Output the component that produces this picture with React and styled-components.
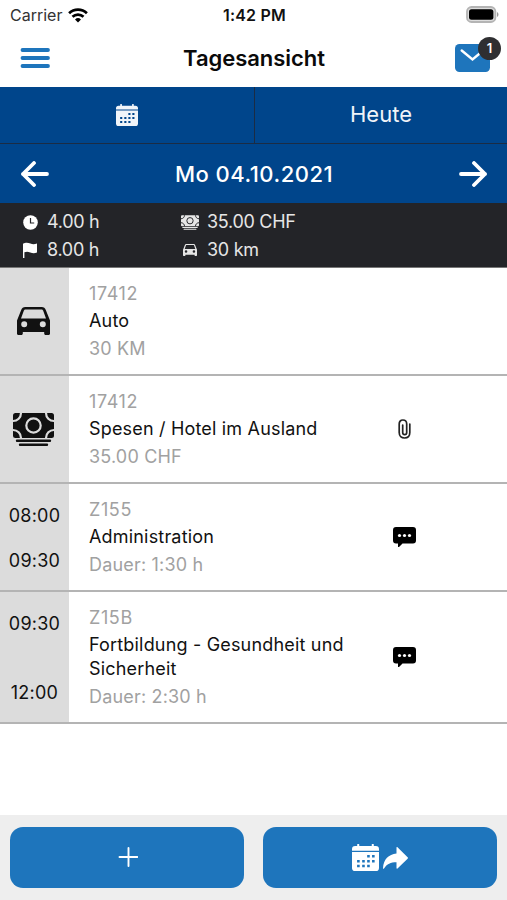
import React from 'react';
import styled, { createGlobalStyle } from 'styled-components';

const PRIMARY = '#1e75bc';
const NAVY = '#00458b';
const DARK = '#232428';
const MUTED = '#a1a1a1';

const GlobalStyle = createGlobalStyle`
  * {
    box-sizing: border-box;
  }
  body {
    margin: 0;
    background: #fff;
    font-family: Inter, 'Liberation Sans', sans-serif;
    color: #111;
  }
  svg {
    display: block;
    flex: none;
  }
  button {
    border: 0;
    padding: 0;
    background: none;
    font: inherit;
    color: inherit;
  }
`;

const Screen = styled.div`
  width: 507px;
  height: 900px;
  display: flex;
  flex-direction: column;
  overflow: hidden;
`;

const StatusBar = styled.div`
  height: 29px;
  padding: 0 8px 0 10px;
  display: grid;
  grid-template-columns: 1fr auto 1fr;
  align-items: center;
  font-size: 16px;
  line-height: 28px;
`;

const Carrier = styled.div`
  display: flex;
  align-items: center;
  gap: 6px;
  padding-top: 1px;
  color: #333;
`;

const Clock = styled.div`
  padding-top: 1px;
  font-weight: 600;
  letter-spacing: 0.2px;
`;

const BatteryWrapper = styled.div`
  display: flex;
  justify-content: flex-end;
`;

const Header = styled.header`
  height: 58px;
  padding: 0 17px 0 20px;
  display: grid;
  grid-template-columns: 1fr auto 1fr;
  align-items: center;
`;

const Title = styled.h1`
  margin: 0 2px 0 0;
  font-size: 22px;
  line-height: 56px;
  font-weight: 600;
  color: #0a0a0a;
  letter-spacing: -0.05px;
`;

const MailButton = styled.button`
  position: relative;
  justify-self: end;
  width: 35px;
  height: 28px;
`;

const Badge = styled.span`
  position: absolute;
  top: -7px;
  right: -11px;
  width: 23px;
  height: 23px;
  border-radius: 50%;
  background: #2f2f31;
  color: #fff;
  font-size: 13px;
  line-height: 23px;
  font-weight: 600;
  text-align: center;
`;

const Tabs = styled.div`
  height: 57px;
  display: grid;
  grid-template-columns: 254px 253px;
  background: ${NAVY};
  border-bottom: 1px solid #1b2c44;
`;

const Tab = styled.button`
  display: flex;
  align-items: center;
  justify-content: center;
  padding-bottom: 1px;
  color: #f0f4f9;
  font-size: 22px;
  line-height: 26px;
  & + & {
    padding-bottom: 2px;
    border-left: 1px solid #1b2c44;
  }
`;

const DateBar = styled.div`
  height: 59px;
  padding: 0 20px 0 21px;
  display: flex;
  align-items: center;
  justify-content: space-between;
  background: ${NAVY};
  color: #fff;
`;

const DateText = styled.div`
  font-size: 22px;
  font-weight: 500;
  letter-spacing: 0.5px;
`;

const Summary = styled.div`
  height: 65px;
  padding: 5px 21px 4px;
  display: grid;
  grid-template-columns: 160px 1fr;
  grid-auto-rows: 28px;
  background: ${DARK};
  border-bottom: 1px solid #777;
`;

const Stat = styled.div`
  display: flex;
  align-items: center;
  gap: 8px;
  color: #e6e6e6;
  font-size: 18px;
  line-height: 28px;
  letter-spacing: -0.3px;
`;

const IconSlot = styled.span`
  width: 18px;
  display: flex;
  justify-content: center;
`;

const List = styled.main`
  flex: 1;
`;

const Row = styled.div`
  display: grid;
  grid-template-columns: 69px 289px 92px;
  border-bottom: 2px solid #b4b4b4;
`;

const Side = styled.div`
  display: flex;
  flex-direction: column;
  align-items: center;
  justify-content: ${({ $times }) => ($times ? 'space-between' : 'center')};
  padding: ${({ $times }) => ($times ? '20px 0 17px' : '0 3px 0 0')};
  background: #dcdcdc;
  font-size: 18px;
  line-height: 24px;
  letter-spacing: 0.25px;
`;

const Details = styled.div`
  padding: 14px 0 13px 20px;
  font-size: 18px;
  line-height: 24px;
  letter-spacing: 0.18px;
`;

const Code = styled.div`
  color: ${MUTED};
  letter-spacing: 0.6px;
`;

const Name = styled.div`
  margin: 3px 0 4px;
`;

const Info = styled.div`
  color: ${MUTED};
`;

const Note = styled.div`
  display: flex;
  align-items: center;
  justify-content: center;
`;

const Footer = styled.footer`
  height: 85px;
  padding: 12px 10px;
  display: grid;
  grid-template-columns: 1fr 1fr;
  gap: 19px;
  background: #eeeeee;
`;

const FooterButton = styled.button`
  height: 61px;
  display: flex;
  align-items: center;
  justify-content: center;
  gap: 4px;
  border-radius: 13px;
  background: ${PRIMARY};
  color: #fff;
`;

const WifiIcon = () => (
  <svg width="20" height="15" viewBox="0 0 20 15" fill="none" stroke="#000" strokeWidth="2.7">
    <path d="M1.1 5.2a12.8 12.8 0 0 1 17.8 0" />
    <path d="M4.5 8.8a8 8 0 0 1 11 0" />
    <path d="M10 14.4 7 11.5a4.3 4.3 0 0 1 6 0Z" fill="#000" stroke="none" />
  </svg>
);

const BatteryIcon = () => (
  <svg width="33" height="17" viewBox="0 0 33 17">
    <rect x="1" y="1" width="28.4" height="15" rx="4.5" fill="#ddd" stroke="#b4b4b4" strokeWidth="1.8" />
    <rect x="3" y="3.2" width="24.4" height="10.6" rx="2.5" />
    <path d="M31 6c2 1 2 4 0 5Z" fill="#999" />
  </svg>
);

const MenuIcon = () => (
  <svg width="30" height="22" viewBox="0 0 30 22" stroke={PRIMARY} strokeWidth="3.8" strokeLinecap="round">
    <path d="M2.5 3H28M2.5 11H28M2.5 19H28" />
  </svg>
);

const MailIcon = () => (
  <svg width="35" height="28" viewBox="0 0 35 28">
    <rect width="35" height="28" rx="4.5" fill={PRIMARY} />
    <path d="m6.7 6.5 10.8 9 10.8-9" fill="none" stroke="#fff" strokeWidth="2.4" strokeLinecap="round" />
  </svg>
);

const CalendarIcon = ({ size, cut }) => (
  <svg width={size} height={size} viewBox="0 0 26 26" fill="currentColor">
    <path d="M3 2h2V.8a1 1 0 0 1 2 0V2h12V.8a1 1 0 0 1 2 0V2h2a3 3 0 0 1 3 3v1.6H0V5a3 3 0 0 1 3-3Z" />
    <path d="M0 7.7h26V23a3 3 0 0 1-3 3H3a3 3 0 0 1-3-3Z" />
    <path
      fill={cut}
      d="M14.6 10.5h2.5V13h-2.5zM19.3 10.5h2.5V13h-2.5zM4.9 15.3h2.5v2.5H4.9zM9.8 15.3h2.5v2.5H9.8zM14.6 15.3h2.5v2.5h-2.5zM19.3 15.3h2.5v2.5h-2.5zM4.9 20h2.5v2.5H4.9zM9.8 20h2.5v2.5H9.8zM14.6 20h2.5v2.5h-2.5z"
    />
  </svg>
);

const ArrowIcon = ({ right }) => (
  <svg
    width="28"
    height="26"
    viewBox="0 0 28 26"
    fill="none"
    stroke="currentColor"
    strokeWidth="3.8"
    strokeLinecap="round"
    strokeLinejoin="round"
  >
    <path d={right ? 'M2 13h24M15 2l11 11-11 11' : 'M26 13H2M13 2 2 13l11 11'} />
  </svg>
);

const ClockIcon = () => (
  <svg width="15" height="15" viewBox="0 0 15 15">
    <circle cx="7.5" cy="7.5" r="7.3" fill="#fff" />
    <path d="M7.5 3v5h3.7" fill="none" stroke={DARK} strokeWidth="1.2" />
  </svg>
);

const FlagIcon = () => (
  <svg width="14" height="16" viewBox="0 0 14 16" fill="#fff">
    <path d="M0 1.8C3 0 5 .6 7.4 1.6 9.6 2.4 11.5 2.4 14 1.5V10.5c-2.5 1-4.5.8-6.7 0C5 9.6 3.5 9.5 1.4 10.3V16H0Z" />
  </svg>
);

const CarIcon = ({ width, height }) => (
  <svg width={width} height={height} viewBox="0 0 33 28" fill="currentColor">
    <path
      fillRule="evenodd"
      d="M4.2 2.9C4.8 1 6.3 0 8.3 0h16.4c2 0 3.5 1 4.1 2.9L33 13.5V26.5c0 .9-.6 1.5-1.5 1.5h-2.8c-.9 0-1.5-.6-1.5-1.5V25H5.8v1.5c0 .9-.6 1.5-1.5 1.5H1.5C.6 28 0 27.4 0 26.5v-13ZM6.9 3.6 4 11.4h25l-2.9-7.8c-.3-.9-.8-1.2-1.7-1.2H8.6c-.9 0-1.4.3-1.7 1.2ZM7.2 14.3a3 3 0 1 0 0 6 3 3 0 0 0 0-6Zm18.6 0a3 3 0 1 0 0 6 3 3 0 0 0 0-6Z"
    />
  </svg>
);

const CashIcon = ({ width, height, cut }) => (
  <svg width={width} height={height} viewBox="0 0 41 33" fill="none">
    <rect width="41" height="25" rx="2.5" fill="currentColor" />
    <g stroke={cut} strokeWidth="2.2">
      <circle cx="20.5" cy="12.5" r="7.2" />
      <path d="M8 0c0 4.5-3.5 8-8 8M33 0c0 4.5 3.5 8 8 8M0 17c4.5 0 8 3.5 8 8M41 17c-4.5 0-8 3.5-8 8" />
    </g>
    <path d="M4 27.7h33M7 31.7h27" stroke="currentColor" strokeWidth="2.4" strokeLinecap="round" />
  </svg>
);

const ClipIcon = () => (
  <svg width="13" height="20" viewBox="0 0 13 20" fill="none" stroke="#222" strokeWidth="1.7" strokeLinecap="round">
    <path d="M11.8 5v8.5c0 3.5-2.3 5.5-5.3 5.5s-5.3-2-5.3-5.500V5C1.2 2.5 2.7 1 4.9 1S8.700 2.500 8.700 5v8.500c0 1.300-.8 2.200-2 2.200s-2-.9-2-2.200V6" />
  </svg>
);

const ChatIcon = () => (
  <svg width="23" height="20" viewBox="0 0 23 20">
    <path d="M3 0h17a3 3 0 0 1 3 3v10.5a3 3 0 0 1-3 3H9.5L6 20c-.5.4-1 .2-1-.5v-3H3a3 3 0 0 1-3-3V3a3 3 0 0 1 3-3Z" />
    <g fill="#fff">
      <circle cx="6.5" cy="8.5" r="1.6" />
      <circle cx="11.5" cy="8.5" r="1.6" />
      <circle cx="16.5" cy="8.5" r="1.6" />
    </g>
  </svg>
);

const ShareIcon = () => (
  <svg width="25" height="22" viewBox="0 0 25 22" fill="currentColor">
    <path d="M13.5.6c0-.7.5-.8 1-.4L24.6 10.3c.5.5.5.9 0 1.4L14.5 21.5c-.5.5-1 .3-1-.4V15.3C7.5 15.3 4 17 1 21.5c-.4.6-1 .4-1-.3C.6 12 5.5 7.3 13.5 6.4Z" />
  </svg>
);

const PlusIcon = () => (
  <svg width="21" height="21" viewBox="0 0 21 21" stroke="currentColor" strokeWidth="1.9" strokeLinecap="round">
    <path d="M11.5 1v18M2.500 10h18" />
  </svg>
);

const stats = [
  { icon: <ClockIcon />, text: '4.00 h' },
  { icon: <CashIcon width={18} height={15} cut={DARK} />, text: '35.00 CHF' },
  { icon: <FlagIcon />, text: '8.00 h' },
  { icon: <CarIcon width={14} height={12} />, text: '30 km' },
];

const entries = [
  { code: '17412', name: 'Auto', info: '30 KM', icon: <CarIcon width={33} height={28} /> },
  {
    code: '17412',
    name: 'Spesen / Hotel im Ausland',
    info: '35.00 CHF',
    icon: <CashIcon width={41} height={33} cut="#dcdcdc" />,
    note: <ClipIcon />,
  },
  { code: 'Z155', name: 'Administration', info: 'Dauer: 1:30 h', times: ['08:00', '09:30'], note: <ChatIcon /> },
  {
    code: 'Z15B',
    name: 'Fortbildung - Gesundheit und Sicherheit',
    info: 'Dauer: 2:30 h',
    times: ['09:30', '12:00'],
    note: <ChatIcon />,
  },
];

const App = () => (
  <>
    <GlobalStyle />
    <Screen>
      <StatusBar>
        <Carrier>
          Carrier
          <WifiIcon />
        </Carrier>
        <Clock>1:42 PM</Clock>
        <BatteryWrapper>
          <BatteryIcon />
        </BatteryWrapper>
      </StatusBar>
      <Header>
        <MenuIcon />
        <Title>Tagesansicht</Title>
        <MailButton>
          <MailIcon />
          <Badge>1</Badge>
        </MailButton>
      </Header>
      <Tabs>
        <Tab>
          <CalendarIcon size={22} cut={NAVY} />
        </Tab>
        <Tab>Heute</Tab>
      </Tabs>
      <DateBar>
        <ArrowIcon />
        <DateText>Mo 04.10.2021</DateText>
        <ArrowIcon right />
      </DateBar>
      <Summary>
        {stats.map(({ icon, text }) => (
          <Stat key={text}>
            <IconSlot>{icon}</IconSlot>
            {text}
          </Stat>
        ))}
      </Summary>
      <List>
        {entries.map(({ code, name, info, icon, times, note }) => (
          <Row key={name}>
            <Side $times={!!times}>{times ? times.map((time) => <span key={time}>{time}</span>) : icon}</Side>
            <Details>
              <Code>{code}</Code>
              <Name>{name}</Name>
              <Info>{info}</Info>
            </Details>
            <Note>{note}</Note>
          </Row>
        ))}
      </List>
      <Footer>
        <FooterButton>
          <PlusIcon />
        </FooterButton>
        <FooterButton>
          <CalendarIcon size={27} cut={PRIMARY} />
          <ShareIcon />
        </FooterButton>
      </Footer>
    </Screen>
  </>
);

export default App;
